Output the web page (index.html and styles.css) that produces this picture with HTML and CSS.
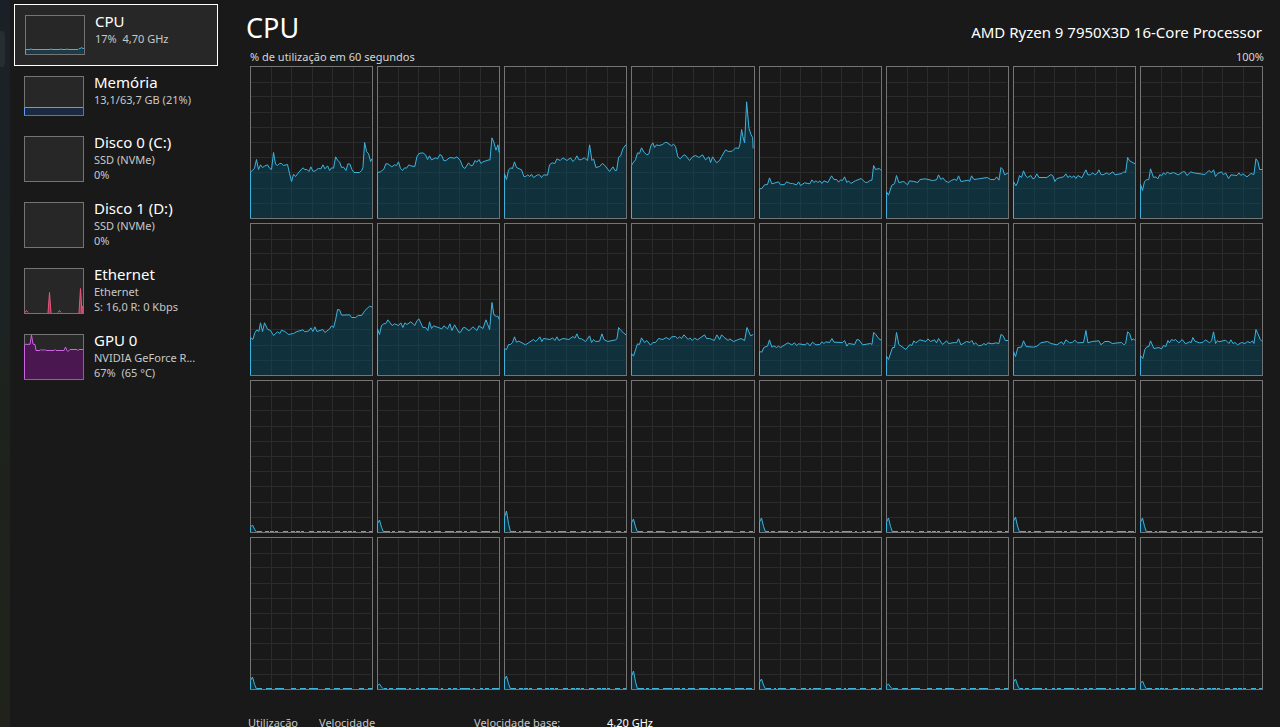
FILE: index.html
```html
<!DOCTYPE html>
<html lang="pt-BR">
<head>
<meta charset="utf-8">
<title>Desempenho</title>
<link rel="stylesheet" href="styles.css">
</head>
<body>
<div class="shell">
  <div class="rail"><span class="rail-handle"></span></div>
  <nav class="devices">
    <button class="device selected" type="button">
      <svg class="thumb short" viewBox="0 0 58 38" preserveAspectRatio="none">
        <path class="fill cpu" d="M0 38V33.5H57.5V38Z"/>
        <path class="line cpu" d="M-.5 38V33.5H4L5 32.8L6 33.5H24L25 32.8L26 33.5H34L35 32.8L36 33.5H40L41 32.8L42 33.5H52L53 32.5L54 33L55 31.5L57 32.5H58"/>
      </svg>
      <span class="info"><span class="name">CPU</span><span class="detail">17% &nbsp;4,70 GHz</span></span>
    </button>
    <button class="device" type="button">
      <svg class="thumb short" viewBox="0 0 58 38" preserveAspectRatio="none">
        <path class="fill memory" d="M0 38V30.5H58V38Z"/>
        <path class="line memory" d="M-.5 38V30.5H58"/>
      </svg>
      <span class="info"><span class="name">Memória</span><span class="detail">13,1/63,7 GB (21%)</span></span>
    </button>
    <button class="device" type="button">
      <svg class="thumb" viewBox="0 0 58 44"></svg>
      <span class="info"><span class="name">Disco 0 (C:)</span><span class="detail">SSD (NVMe)</span><span class="detail">0%</span></span>
    </button>
    <button class="device" type="button">
      <svg class="thumb" viewBox="0 0 58 44"></svg>
      <span class="info"><span class="name">Disco 1 (D:)</span><span class="detail">SSD (NVMe)</span><span class="detail">0%</span></span>
    </button>
    <button class="device" type="button">
      <svg class="thumb" viewBox="0 0 58 44" preserveAspectRatio="none">
        <path class="fill network" d="M23 44L24.5 23.5L26 44ZM54 44L55.5 19.5L57.5 44Z"/>
        <path class="line network" d="M0 43.5L1.5 41.5L3 43.5M23 44L24.5 23.5L26 44M33 43.5L34.5 41.5L36 43.5M54 44L55.5 19.5L57 44L57.5 37"/>
      </svg>
      <span class="info"><span class="name">Ethernet</span><span class="detail">Ethernet</span><span class="detail">S: 16,0 R: 0 Kbps</span></span>
    </button>
    <button class="device" type="button">
      <svg class="thumb" viewBox="0 0 58 44" preserveAspectRatio="none">
        <path class="fill gpu" d="M0 44V9.5H5L6.5 0L8 9.5H10L11 15.5H39L40.5 12L42 15.5L43 16.5L45 15H58V44Z"/>
        <path class="line gpu" d="M-.5 44V10L1 9L2 9.5H3L4 9L5 9.5L6.5 0L8 9L9 9.5H10L11 15.5H15L16 14.5L17 15.5L18 14.5L19 15.5L20 14.5L21 15.5H29L30 14.5L31 15.5H39L40.5 12L42 15.5L43 16.5L45 14.5H52L53 15.5L54 14.5H58"/>
      </svg>
      <span class="info"><span class="name">GPU 0</span><span class="detail">NVIDIA GeForce R...</span><span class="detail">67% &nbsp;(65 °C)</span></span>
    </button>
  </nav>
  <main class="panel">
    <header class="panel-head">
      <h1 class="title">CPU</h1>
      <p class="model">AMD Ryzen 9 7950X3D 16-Core Processor</p>
    </header>
    <div class="scale"><span>% de utilização em 60 segundos</span><span>100%</span></div>
    <div class="cores" id="cores"></div>
    <dl class="stats">
      <dt>Utilização</dt>
      <dt>Velocidade</dt>
      <dt>Velocidade base:</dt>
      <dd>4,20 GHz</dd>
    </dl>
  </main>
</div>
<script src="charts.js"></script>
</body>
</html>
```
FILE: styles.css
```css
* { box-sizing: border-box; }

body {
  margin: 0;
  overflow: hidden;
  background: #191919;
  color: #fff;
  font-family: "Noto Sans", "Open Sans", sans-serif;
  font-size: 11px;
}

.shell { display: flex; height: 100vh; }

.rail {
  flex: none;
  width: 10px;
  padding-top: 31px;
  background: linear-gradient(#1b2028, #1b2324 35%, #1f221c 65%, #21221c);
}

.rail-handle {
  display: block;
  width: 5px;
  height: 36px;
  border-radius: 0 4px 4px 0;
  background: #262d33;
}

.devices {
  flex: none;
  width: 208px;
  padding: 4px 0 0 4px;
}

.device {
  display: flex;
  gap: 10px;
  width: 100%;
  padding: 10px;
  border: 0;
  background: none;
  color: inherit;
  font: inherit;
  text-align: left;
}

.device.selected {
  border: 1px solid #fff;
  background: #272727;
}

.thumb {
  flex: none;
  width: 60px;
  height: 46px;
  border: 1px solid #747474;
  background: #272727;
  overflow: visible;
}

.thumb.short { height: 40px; }

.info {
  display: flex;
  flex-direction: column;
  height: 40px;
  margin-top: -4px;
  white-space: nowrap;
}

.name { font-size: 15px; line-height: 20px; }
.detail { color: #c8c8c8; font-size: 11px; line-height: 15px; }

.line { fill: none; stroke-width: 1; }
.fill { stroke: none; }
.line.cpu { stroke: #3cb4e0; }
.fill.cpu { fill: #1c3b46; }
.line.memory { stroke: #5b9df5; }
.fill.memory { fill: #1b2a42; }
.line.network { stroke: #e8567f; }
.fill.network { fill: #8c3a55; }
.line.gpu { stroke: #cf63e6; }
.fill.gpu { fill: #4b1750; }

.panel {
  flex: 1;
  min-width: 0;
  padding: 8px 16px 0 32px;
}

.panel-head {
  display: flex;
  justify-content: space-between;
  align-items: center;
  height: 40px;
  padding-right: 2px;
  margin-left: -4px;
}

.title { margin: 0; font-size: 27px; font-weight: 400; line-height: 38px; }
.model { margin: 8px 0 0; font-size: 15px; line-height: 20px; }

.scale {
  display: flex;
  justify-content: space-between;
  height: 18px;
  color: #d6d6d6;
  line-height: 18px;
}

.cores {
  display: grid;
  grid-template-columns: repeat(8, minmax(0, 1fr));
  gap: 4px;
  margin-right: 1px;
}

.core { height: 153px; border: 1px solid #747474; }

.core svg { display: block; width: 100%; height: 100%; overflow: visible; }

.grid { fill: none; stroke: #2b2b2b; shape-rendering: crispEdges; }
.area { fill: #02526e; fill-opacity: .4; }
.trace { fill: none; stroke: #3cb4e0; }
.idle { stroke: #3cb4e0; shape-rendering: crispEdges; }

.grid, .trace, .idle { stroke-width: 1; vector-effect: non-scaling-stroke; }

.stats {
  display: grid;
  grid-template-columns: 71px 155px 133px auto;
  margin: 24px 0 0 -2px;
  color: #c8c8c8;
  line-height: 18px;
}

.stats dd { margin: 0; color: #fff; }
```
FILE: charts.js
```js
const W = 121;
const H = 151;
const UNIT = 3; // trace samples are stored in thirds of a pixel

// One trace per logical processor: "x,y" samples, with the chart's top at `top`.
const BUSY = [
  { top: 19, traces: [
    "31,335 37,331 43,324 49,298 55,328 61,314 67,322 73,318 82,314 88,324 94,328 100,277 106,312 112,316 118,310 124,310 130,316 142,313 148,340 154,364 160,342 166,349 176,336 188,323 194,328 200,328 206,334 212,320 218,333 224,333 234,325 242,326 248,314 254,326 262,317 268,331 274,323 280,324 286,290 292,300 298,306 304,322 310,321 317,331 323,311 329,312 335,328 341,337 358,337 364,331 368,322 373,247 379,274 385,281 391,304 397,295",
    "412,337 421,335 431,327 437,311 443,311 455,320 463,314 469,316 475,305 481,325 487,331 493,323 499,324 506,314 512,317 524,319 530,290 536,280 548,278 556,284 562,298 568,287 574,299 586,293 592,296 599,283 605,287 611,302 617,301 629,292 643,294 650,290 660,301 668,321 674,325 685,308 692,317 698,315 704,301 710,306 716,298 722,310 728,305 746,299 749,300 755,233 761,247 767,270 773,254 778,277",
    "13,340 19,358 25,330 31,323 37,325 43,305 49,322 64,329 71,349 76,349 83,344 89,349 94,342 100,352 112,344 118,344 124,352 130,344 142,345 148,314 156,308 164,310 170,296 180,301 188,293 200,301 211,293 218,304 224,298 230,287 236,299 244,298 252,293 262,301 268,254 275,301 280,296 287,322 298,319 306,310 312,314 328,334 338,320 344,331 349,331 355,291 361,287 368,265 378,253",
    "394,316 398,309 406,299 412,278 418,280 424,263 432,277 440,284 446,281 452,257 458,248 463,262 469,254 476,256 488,253 494,247 500,247 514,257 520,252 526,259 533,290 540,296 551,284 556,286 568,301 577,290 586,286 596,292 607,284 616,299 626,290 631,307 637,290 649,308 658,301 664,289 676,269 684,274 696,273 706,263 715,265 719,252 724,208 728,230 733,248 739,125 746,204 752,223 757,232 761,265",
    "13,386 20,385 28,374 37,373 43,353 50,371 70,365 76,374 88,373 94,365 106,370 112,370 124,374 130,365 136,376 148,368 164,371 170,359 176,367 182,362 188,367 194,362 200,370 206,362 218,367 229,347 236,358 244,358 250,366 256,359 262,361 268,350 275,367 280,362 287,370 300,362 318,355 330,367 338,366 344,361 350,360 355,316 361,328 372,325 378,331",
    "394,395 400,405 410,375 418,371 424,346 431,367 446,364 457,374 463,362 476,364 488,367 494,358 510,356 532,361 544,359 550,344 557,358 563,353 570,362 580,367 588,361 598,357 604,361 610,347 617,364 640,360 643,364 649,347 656,358 670,356 696,352 706,358 718,358 724,350 731,360 737,322 743,328 748,344 760,338",
    "10,364 17,377 22,368 28,346 34,352 40,332 47,348 52,352 62,346 68,356 74,353 80,341 86,352 110,352 122,343 128,347 134,364 140,355 160,350 167,341 173,352 179,347 185,352 191,347 197,355 203,346 215,353 227,329 233,344 240,344 248,338 254,344 260,340 266,329 272,343 278,344 290,338 296,343 308,335 314,344 335,340 340,335 346,337 352,292 358,302 375,311",
    "391,372 397,391 403,364 409,359 416,358 421,326 430,352 437,350 443,356 449,343 454,347 460,338 466,343 472,335 478,341 490,337 504,344 520,334 524,335 530,346 542,335 550,338 584,343 596,331 604,337 610,329 616,349 622,340 634,335 640,344 646,338 655,355 662,344 680,346 686,338 692,346 698,341 710,350 722,340 731,343 737,296 743,305 748,328 760,328"
  ] },
  { top: 16, traces: [
    "31,358 38,364 44,344 50,335 56,340 61,314 67,340 73,314 82,333 91,337 100,352 112,341 119,346 124,336 136,341 144,349 160,346 168,341 188,335 194,341 206,338 212,329 218,340 224,326 230,340 248,334 254,343 268,332 274,323 280,328 286,305 292,274 298,275 304,291 328,290 334,298 346,298 354,292 364,292 374,277 388,264 397,267",
    "412,332 418,349 424,322 431,317 437,316 443,305 456,322 463,317 475,322 482,314 488,328 494,314 500,319 512,311 524,322 530,308 536,302 548,328 556,328 563,337 568,311 574,331 580,323 605,332 611,323 622,332 629,317 635,337 643,320 656,343 662,341 668,329 674,328 686,338 698,326 710,337 716,323 728,331 737,305 748,334 755,253 761,290 768,295 773,294 778,304",
    "13,392 19,394 25,379 31,379 37,373 43,356 49,372 56,369 76,380 100,364 107,370 119,356 125,370 130,361 150,364 157,359 164,367 170,356 176,367 188,361 206,364 218,355 224,360 230,347 236,361 244,362 256,370 268,353 274,373 280,364 286,370 298,369 305,347 311,364 322,370 346,365 350,362 355,328 360,334 370,345 378,350",
    "394,406 400,414 406,395 412,377 418,379 424,359 433,373 440,367 451,381 458,373 466,373 475,361 488,364 498,358 508,364 514,356 526,355 532,361 538,356 544,361 551,350 564,364 569,359 576,367 583,360 592,365 613,350 619,361 628,361 642,367 650,350 658,364 664,350 672,358 684,367 688,362 700,370 712,365 722,361 733,367 740,328 751,353 761,349",
    "13,400 20,402 26,388 37,384 43,365 50,387 56,383 64,388 70,384 76,388 98,374 110,380 118,374 124,382 130,377 150,380 157,374 164,383 172,372 182,380 194,379 200,371 206,376 212,371 223,373 230,361 236,372 262,373 268,367 275,384 280,376 298,379 305,364 311,365 322,380 346,376 350,379 355,343 361,348 370,361 378,366",
    "394,414 400,424 412,388 418,388 424,343 431,379 452,394 464,379 470,382 476,368 482,374 494,365 512,370 518,362 526,370 538,365 544,374 550,361 562,379 574,368 580,376 598,373 604,374 610,362 617,380 634,370 644,373 650,367 656,379 661,374 670,383 680,381 686,376 692,380 698,374 710,377 722,374 731,376 737,349 743,352 750,367 760,367",
    "10,400 16,415 23,388 34,387 40,368 48,385 70,387 80,384 92,374 112,370 122,376 140,380 154,371 160,379 167,365 178,374 186,373 194,366 202,374 220,373 227,337 233,374 246,370 266,368 272,380 284,370 296,370 306,376 334,373 341,380 346,376 352,341 358,346 364,366 370,362 375,367",
    "391,412 398,421 404,394 410,386 416,385 421,368 431,391 446,388 454,392 460,382 467,385 473,367 478,374 484,364 490,367 496,364 506,374 516,364 526,377 538,371 543,373 548,358 554,369 568,374 578,373 586,365 598,374 604,368 610,341 616,376 622,367 626,371 646,366 656,376 662,365 668,376 674,373 682,380 694,373 704,376 712,370 720,374 726,368 731,376 737,334 743,347 750,364 760,370"
  ] }
];

// Parked cores: height in pixels of the opening spike.
const IDLE = [7, 12, 21, 13, 14, 14, 15, 14, 12, 5, 13, 18, 10, 5, 10, 8];
const DASHES = ["5 3 4 1 4 1 3 5", "6 2 3 3 7 4 9 2", "5 3 2 2 8 4 6 5", "5 4 6 3 9 7", "3 2 4 3 10 3 2 5"];

function grid() {
  let d = "";
  for (let i = 1; i < 6; i++) {
    d += `M${Math.round(i * 20.6) - 0.5} 0V${H}`;
  }
  for (let i = 1; i < 10; i++) {
    d += `M0 ${Math.round(i * 15.2) + (i === 1 ? 1 : 0) - 0.5}H${W - 1}`;
  }
  return `<path class="grid" d="${d}"/>`;
}

function plot(points) {
  const path = points.map(p => p.join(" ")).join("L");
  const last = points[points.length - 1][0];
  return `<path class="area" d="M0 ${H}L${path}L${last} ${H}Z"/>` +
    `<path class="trace" d="M-.5 ${H}L${path}"/>`;
}

function addCore(content) {
  const core = document.createElement("div");
  core.className = "core";
  core.innerHTML = `<svg viewBox="0 0 ${W} ${H}" preserveAspectRatio="none">${grid()}${content}</svg>`;
  document.getElementById("cores").append(core);
}

for (const row of BUSY) {
  for (const trace of row.traces) {
    const samples = trace.split(" ").map(s => s.split(",").map(Number));
    const left = samples[0][0];
    addCore(plot(samples.map(([x, y]) => [
      Math.min(W, (x - left) / UNIT - 0.5),
      (y - row.top) / UNIT - 0.5
    ])));
  }
}

IDLE.forEach((height, i) => {
  const spike = plot([[-0.5, H - height * 0.7], [1.5, H - height], [3.5, H - height * 0.4], [5.5, H]]);
  const dash = DASHES[i % DASHES.length];
  addCore(`${spike}<path class="idle" stroke-dasharray="${dash}" d="M6 ${H - 0.5}H${W}"/>`);
});
```
